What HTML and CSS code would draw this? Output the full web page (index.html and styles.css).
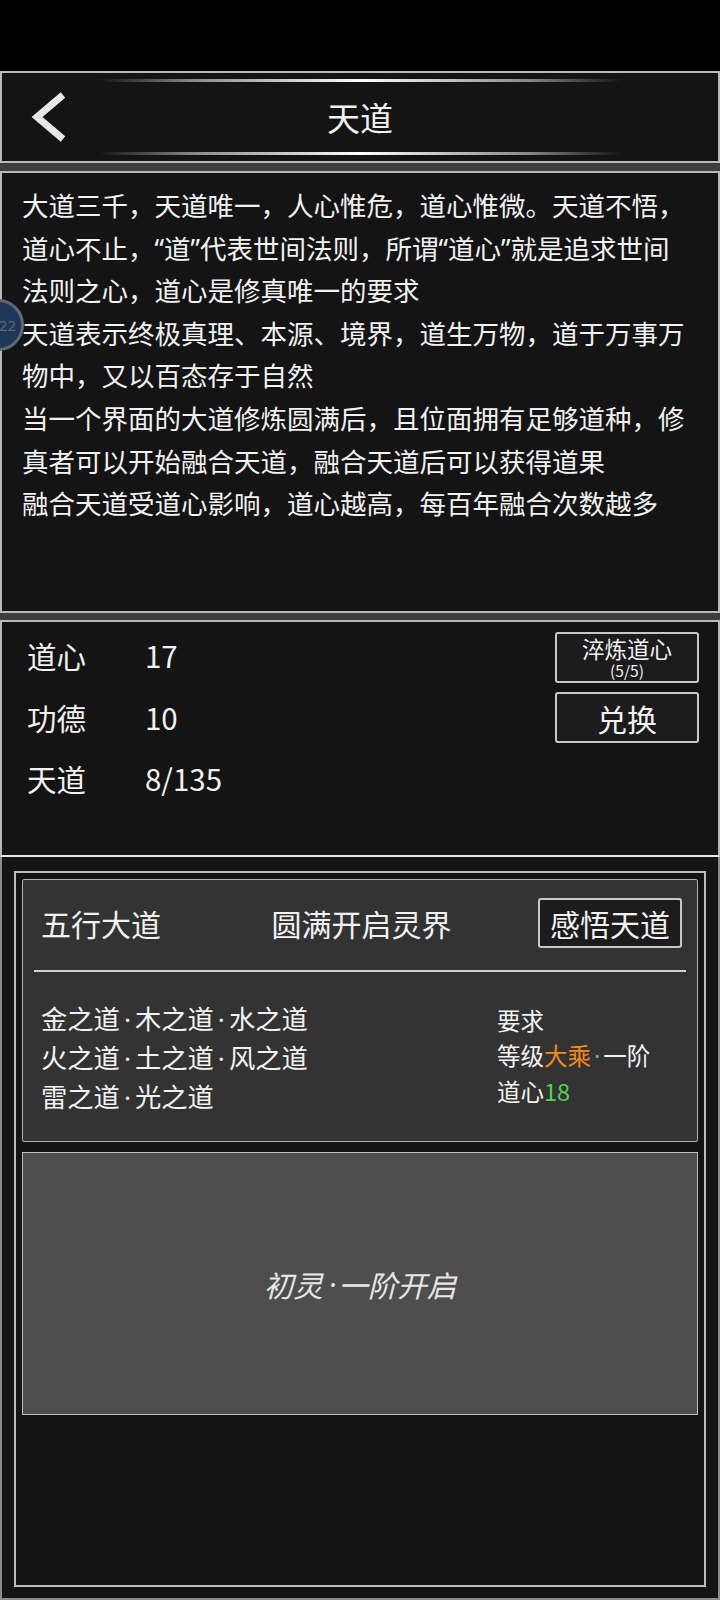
FILE: index.html
```html
<!DOCTYPE html>
<html lang="zh-CN">

<head>
    <meta charset="UTF-8" />
    <meta name="viewport" content="width=device-width, initial-scale=1.0" />
    <title>天道</title>
    <link rel="stylesheet" href="styles.css">
</head>

<body>
    <div class="status"></div>

    <header class="titlebar">
        <div class="glow"></div>
        <div class="titlerow">
            <svg class="back" width="40" height="54" viewBox="0 0 40 54">
                <polyline points="35,5 9,27 35,49" fill="none" stroke="#e8e8e8" stroke-width="7" />
            </svg>
            <h1>天道</h1>
            <span></span>
        </div>
        <div class="glow"></div>
    </header>

    <div class="band"></div>

    <section class="intro">
        <p>大道三千，天道唯一，人心惟危，道心惟微。天道不悟，道心不止，“道”代表世间法则，所谓“道心”就是追求世间法则之心，道心是修真唯一的要求</p>
        <p>天道表示终极真理、本源、境界，道生万物，道于万事万物中，又以百态存于自然</p>
        <p>当一个界面的大道修炼圆满后，且位面拥有足够道种，修真者可以开始融合天道，融合天道后可以获得道果</p>
        <p>融合天道受道心影响，道心越高，每百年融合次数越多</p>
        <div class="bubble">22</div>
    </section>

    <div class="band"></div>

    <section class="stats">
        <ul class="stat-list">
            <li><span class="label">道心</span><span>17</span></li>
            <li><span class="label">功德</span><span>10</span></li>
            <li><span class="label">天道</span><span>8/135</span></li>
        </ul>
        <div class="stat-actions">
            <button class="btn btn-refine"><span>淬炼道心</span><small>(5/5)</small></button>
            <button class="btn btn-swap">兑换</button>
        </div>
    </section>

    <section class="dao">
        <div class="frame">
            <div class="card">
                <div class="card-head">
                    <span>五行大道</span>
                    <span>圆满开启灵界</span>
                    <button class="btn btn-insight">感悟天道</button>
                </div>
                <div class="divider"></div>
                <div class="card-body">
                    <ul class="paths">
                        <li>金之道<span class="dot">·</span>木之道<span class="dot">·</span>水之道</li>
                        <li>火之道<span class="dot">·</span>土之道<span class="dot">·</span>风之道</li>
                        <li>雷之道<span class="dot">·</span>光之道</li>
                    </ul>
                    <ul class="require">
                        <li>要求</li>
                        <li>等级<span class="orange">大乘</span><span class="dot green">·</span>一阶</li>
                        <li>道心<span class="green">18</span></li>
                    </ul>
                </div>
            </div>
            <div class="stage">初灵<span class="dot">·</span>一阶开启</div>
        </div>
    </section>
</body>

</html>
```

FILE: styles.css
```css
* {
    box-sizing: border-box;
}

body {
    margin: 0;
    background-color: #000;
    color: #f2f2f2;
    font-family: "Noto Sans CJK SC", "Noto Sans", sans-serif;
    width: 720px;
    overflow: hidden;
}

ul {
    list-style: none;
    margin: 0;
    padding: 0;
}

.dot {
    font-family: "Noto Sans", sans-serif;
    margin: 0 4px;
}

.status {
    height: 71px;
}

/* title bar */
.titlebar {
    height: 92px;
    background-color: #141414;
    border: 2px solid #b8b8b8;
    padding: 6px 0;
    display: flex;
    flex-direction: column;
}

.glow {
    width: 521px;
    height: 3px;
    margin: 0 auto;
    background: linear-gradient(90deg, rgba(255, 255, 255, 0), rgba(255, 255, 255, 0.5) 18%, #fff 50%, rgba(255, 255, 255, 0.5) 82%, rgba(255, 255, 255, 0));
}

.titlerow {
    flex: 1;
    display: grid;
    grid-template-columns: 1fr auto 1fr;
    align-items: center;
}

.back {
    margin-left: 26px;
}

.titlerow h1 {
    margin: 0;
    font-size: 33px;
    font-weight: normal;
}

.band {
    height: 8px;
    background-color: #3e3e3e;
}

.band + .stats {
    margin-top: -1px;
}

/* description: latin font first so the curly quotes stay narrow */
.intro {
    position: relative;
    height: 442px;
    background-color: #141414;
    border: 2px solid #b8b8b8;
    padding: 12px 26px 0 20px;
    font-family: "Noto Sans", "Noto Sans CJK SC", sans-serif;
    font-size: 26.5px;
    line-height: 42.6px;
}

.intro p {
    margin: 0;
}

.bubble {
    position: absolute;
    left: -30px;
    top: 126px;
    width: 52px;
    height: 52px;
    border-radius: 50%;
    background-color: #1d3759;
    border: 3px solid #5f6873;
    color: #5d6978;
    font-size: 15px;
    line-height: 46px;
    text-align: right;
    padding-right: 5px;
}

/* stats */
.stats {
    height: 237px;
    background-color: #141414;
    border: 2px solid #b8b8b8;
    border-bottom-color: #e8e8e8;
    display: flex;
    justify-content: space-between;
    padding: 0 19px 0 25px;
}

.stat-list {
    padding-top: 3px;
}

.stat-list li {
    display: flex;
    font-size: 29.5px;
    line-height: 61.5px;
}

.stat-list .label {
    width: 118px;
}

.stat-actions {
    display: flex;
    flex-direction: column;
    gap: 9px;
    padding-top: 10px;
}

.btn {
    font-family: inherit;
    color: #f2f2f2;
    background-color: #1c1c1c;
    border: 2px solid #c8c8c8;
    border-radius: 3px;
    cursor: pointer;
    padding: 0;
}

.btn-refine {
    width: 144px;
    height: 51px;
    display: flex;
    flex-direction: column;
    align-items: center;
    justify-content: center;
}

.btn-refine span {
    font-size: 22.5px;
    line-height: 25px;
}

.btn-refine small {
    font-size: 15.5px;
    line-height: 18px;
}

.btn-swap {
    width: 144px;
    height: 51px;
    font-size: 30px;
}

/* dao section */
.dao {
    height: 743px;
    background-color: #141414;
    border: 2px solid #8c8c8c;
    border-top: 0;
    display: flex;
    flex-direction: column;
}

.frame {
    flex: 1;
    margin: 14px 12px 11px;
    border: 2px solid #bdbdbd;
    padding: 6px 6px 0;
    display: flex;
    flex-direction: column;
    gap: 10px;
}

.card {
    height: 263px;
    background-color: #333;
    border: 1px solid #b0b0b0;
    border-radius: 2px;
    padding-top: 18px;
}

.card-head {
    display: grid;
    grid-template-columns: 1fr auto 1fr;
    align-items: center;
    padding: 0 15px 0 18px;
    font-size: 30px;
    line-height: 40px;
}

.btn-insight {
    justify-self: end;
    width: 144px;
    height: 50px;
    font-size: 30px;
}

.divider {
    height: 2px;
    margin: 22px 11px 0;
    background-color: #d0d0d0;
}

.card-body {
    display: grid;
    grid-template-columns: 456px 1fr;
    padding: 27px 15px 0 18px;
}

.paths li {
    font-size: 26.3px;
    line-height: 38px;
}

.require {
    padding-top: 4px;
}

.require li {
    font-size: 23.5px;
    line-height: 35px;
}

.require .dot {
    margin: 0 3px;
}

.orange {
    color: #f08a1c;
}

.green {
    color: #52d452;
}

.stage {
    height: 263px;
    background-color: #4e4e4e;
    border: 1px solid #bdbdbd;
    display: flex;
    align-items: center;
    justify-content: center;
    font-size: 29.5px;
    font-style: italic;
    color: #e6e6e6;
}

.stage .dot {
    margin: 0 2px 0 6px;
}
```
